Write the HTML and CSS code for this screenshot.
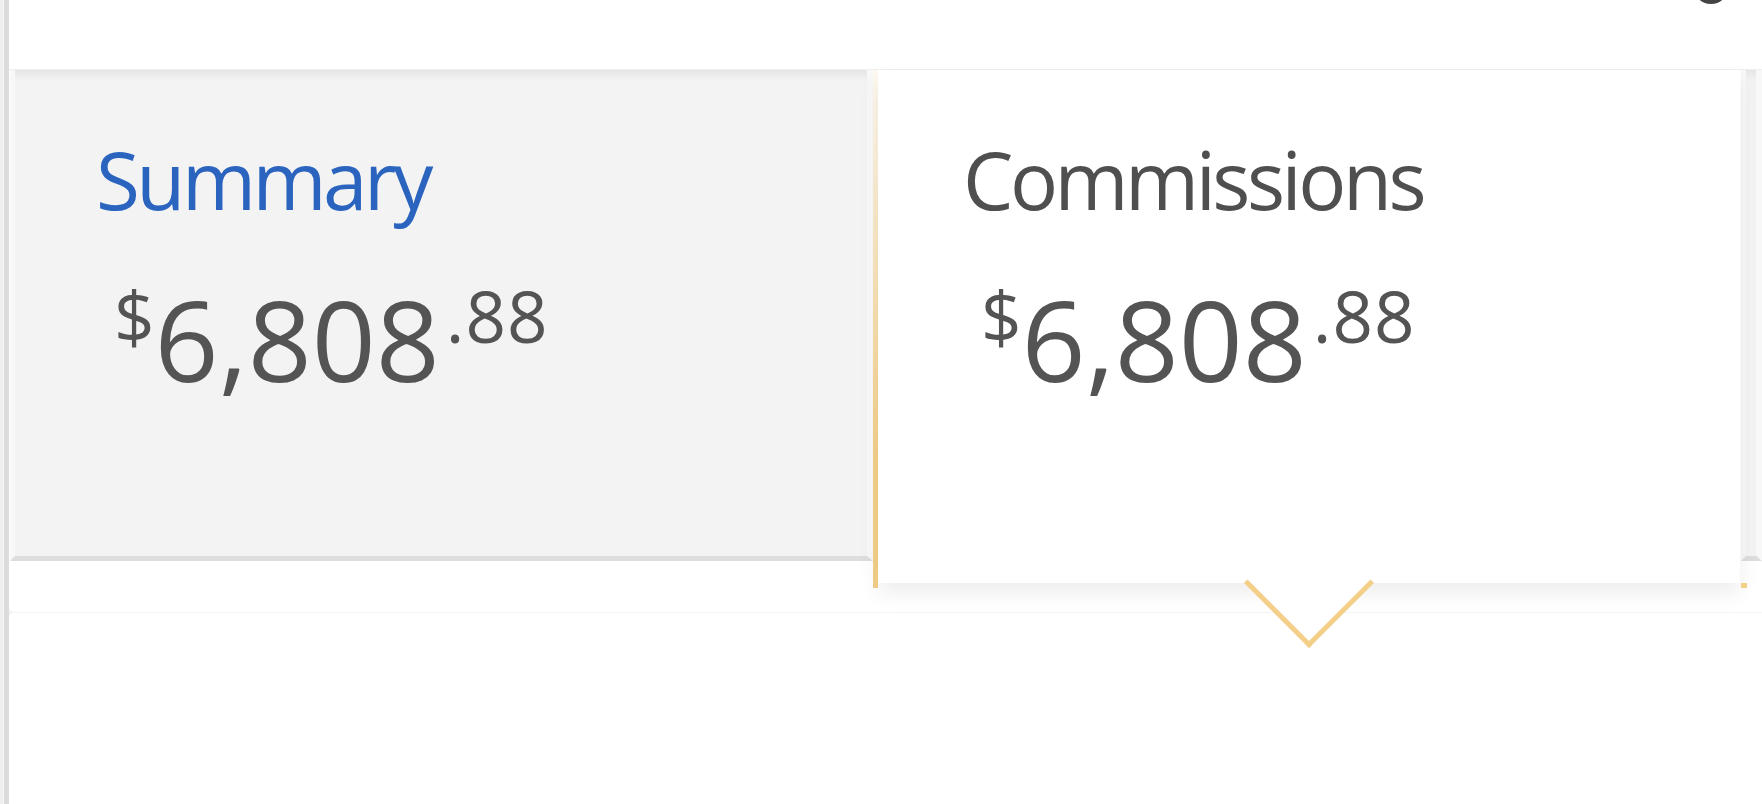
FILE: index.html
```html
<!DOCTYPE html>
<html lang="en">
<head>
<meta charset="utf-8">
<title>Summary</title>
<link rel="stylesheet" href="styles.css">
</head>
<body>
<div class="card card-top">
  <header class="topbar">
    <span class="avatar"></span>
  </header>
  <div class="tabs">
    <div class="tab tab-summary">
      <h2 class="tab-title tab-title-link">Summary</h2>
      <div class="amount"><span class="amount-sup">$</span><span class="amount-whole">6,808</span><span class="amount-sup amount-cents">.88</span></div>
    </div>
    <div class="tab-selected">
      <div class="panel">
        <h2 class="tab-title">Commissions</h2>
        <div class="amount"><span class="amount-sup">$</span><span class="amount-whole">6,808</span><span class="amount-sup amount-cents">.88</span></div>
      </div>
    </div>
    <div class="tab tab-rest"></div>
  </div>
</div>
<div class="card card-bottom"></div>
</body>
</html>
```

FILE: styles.css
```css
html, body {
  margin: 0;
  height: 100%;
}

body {
  font-family: "Open Sans", "Noto Sans", sans-serif;
  padding-left: 9px;
  box-sizing: border-box;
  overflow: hidden;
  display: flex;
  flex-direction: column;
  background: linear-gradient(to right, #efefef 0 3px, #f6f6f6 3px 4px, #dcdcdc 4px 9px, #f4f4f4 9px);
}

.card {
  background: #ffffff;
}

.card-top {
  height: 612px;
  flex: none;
  margin-bottom: 1px;
  border-bottom-left-radius: 5px;
}

.card-bottom {
  flex: 1;
  border-top-left-radius: 5px;
}

.topbar {
  height: 70px;
  box-sizing: border-box;
  display: flex;
  justify-content: flex-end;
  align-items: flex-start;
  padding-right: 33px;
  border-bottom: 1px solid #efefef;
}

.avatar {
  width: 36px;
  height: 36px;
  margin-top: -32px;
  border-radius: 50%;
  background: #444444;
}

.tabs {
  display: flex;
  align-items: flex-start;
  padding-left: 1px;
}

.tab {
  height: 491px;
  box-sizing: border-box;
  background: #f3f3f3;
  border-left: 5px solid #f8f8f8;
  border-right: 6px solid #f8f8f8;
  border-bottom: 5px solid #dddddd;
  box-shadow: inset 0 12px 10px -8px rgba(0, 0, 0, 0.07);
  padding: 69px 0 0 81px;
}

.tab-summary {
  width: 863px;
  flex: none;
}

.tab-rest {
  flex: 1;
  margin-left: 1px;
  padding: 0;
}

.tab-selected {
  width: 867px;
  height: 518px;
  flex: none;
  box-sizing: border-box;
  position: relative;
  z-index: 1;
  border-left: 5px solid #f5d28c;
  border-image: linear-gradient(to bottom, rgba(245, 210, 140, 0.12), rgba(245, 210, 140, 0.55) 35%, #f4cf88 75%) 1;
}

.tab-selected::after {
  content: "";
  position: absolute;
  right: -7px;
  bottom: 0;
  width: 6px;
  height: 5px;
  background: #f4cf88;
}

.panel {
  position: relative;
  height: 513px;
  box-sizing: border-box;
  background: #ffffff;
  box-shadow: 0 10px 20px rgba(0, 0, 0, 0.07);
  padding: 69px 0 0 85px;
}

.panel::after {
  content: "";
  position: absolute;
  left: 50%;
  bottom: -46px;
  width: 92px;
  height: 92px;
  margin-left: -46px;
  box-sizing: border-box;
  background: #ffffff;
  border-right: 5px solid #f4cf88;
  border-bottom: 5px solid #f4cf88;
  transform: rotate(45deg);
}

.tab-title {
  margin: 0;
  font-size: 80px;
  font-weight: 400;
  line-height: 1;
  letter-spacing: -3.5px;
  color: #4f4f4f;
  white-space: nowrap;
}

.tab-title-link {
  color: #2a64bf;
}

.amount {
  margin: 64px 0 0 18px;
  font-size: 112px;
  line-height: 1;
  color: #545454;
  white-space: nowrap;
}

.amount-sup {
  font-size: 71px;
  line-height: 66px;
  vertical-align: top;
}

.amount-cents {
  margin-left: 6px;
  letter-spacing: 1px;
}
```
